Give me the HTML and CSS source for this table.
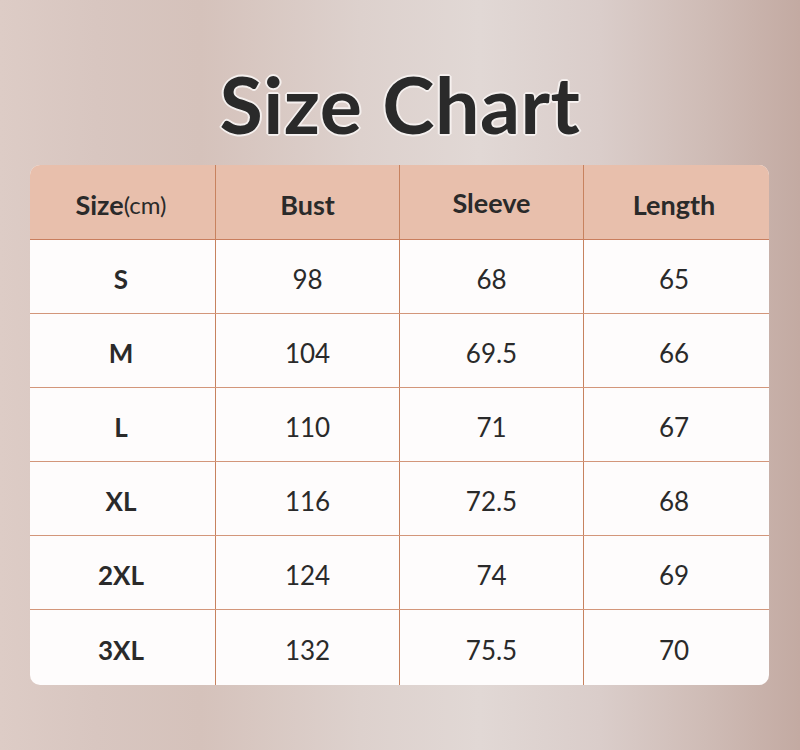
FILE: index.html
```html
<!DOCTYPE html>
<html>
<head>
<meta charset="utf-8">
<link rel="stylesheet" href="styles.css">
</head>
<body>
<div class="page">
  <h1 class="title">Size Chart</h1>
  <div class="chart">
    <div class="row head">
      <div class="cell"><b>Size</b><span class="unit">(cm)</span></div>
      <div class="cell"><b>Bust</b></div>
      <div class="cell sleeve"><b>Sleeve</b></div>
      <div class="cell"><b>Length</b></div>
    </div>
    <div class="row"><div class="cell sz">S</div><div class="cell">98</div><div class="cell">68</div><div class="cell">65</div></div>
    <div class="row"><div class="cell sz">M</div><div class="cell">104</div><div class="cell">69.5</div><div class="cell">66</div></div>
    <div class="row"><div class="cell sz">L</div><div class="cell">110</div><div class="cell">71</div><div class="cell">67</div></div>
    <div class="row"><div class="cell sz">XL</div><div class="cell">116</div><div class="cell">72.5</div><div class="cell">68</div></div>
    <div class="row"><div class="cell sz">2XL</div><div class="cell">124</div><div class="cell">74</div><div class="cell">69</div></div>
    <div class="row last"><div class="cell sz">3XL</div><div class="cell">132</div><div class="cell">75.5</div><div class="cell">70</div></div>
  </div>
</div>
</body>
</html>
```
FILE: styles.css
```css
* { box-sizing: border-box; }
html, body { margin: 0; padding: 0; }
body {
  width: 800px;
  height: 750px;
  overflow: hidden;
  font-family: Lato, "Open Sans", sans-serif;
  color: #2a2a2a;
  background: linear-gradient(90deg, #ddccc6 0%, #d8c6c0 12%, #d5c2bb 25%, #ddd1cd 45%, #e1d8d5 60%, #dacdca 75%, #cfbcb6 88%, #c3aaa2 100%);
}
.page {
  display: flex;
  flex-direction: column;
  align-items: center;
  padding-top: 56px;
}
.title {
  margin: 0;
  font-size: 79px;
  font-weight: 700;
  line-height: 96px;
  height: 96px;
  color: #2a2a2a;
  letter-spacing: 0.5px;
  text-shadow: 0 0 2px #fff, 1px 1px 0 #f4eeec, -1px -1px 0 #f4eeec, 1px -1px 0 #f4eeec, -1px 1px 0 #f4eeec, 2px 0 0 #f4eeec, -2px 0 0 #f4eeec, 0 2px 0 #f4eeec, 0 -2px 0 #f4eeec;
}
.chart {
  margin-top: 13px;
  width: 739px;
  margin-left: -1px;
  border-radius: 10px;
  overflow: hidden;
  background: #fefcfc;
}
.row {
  display: grid;
  grid-template-columns: 186px 184px 184px 185px;
  height: 74px;
  border-bottom: 1px solid #d3967a;
}
.row.head {
  height: 75px;
  background: #e8bfac;
  border-bottom: 1px solid #c97e5e;
}
.row.last { border-bottom: none; height: 75px; }
.cell {
  display: flex;
  align-items: center;
  justify-content: center;
  font-size: 26px;
  color: #2a2a2a;
  border-right: 1px solid #c7825f;
  padding-top: 4px;
}
.cell:first-child { padding-right: 3px; }
.cell:last-child { border-right: none; padding-right: 5px; }
.head .cell { font-size: 27px; padding-top: 4px; }
.head .cell b { font-weight: 700; }
.head .sleeve { padding-top: 0; }
.unit { font-size: 24px; font-weight: 400; }
.sz { font-weight: 700; }
```
